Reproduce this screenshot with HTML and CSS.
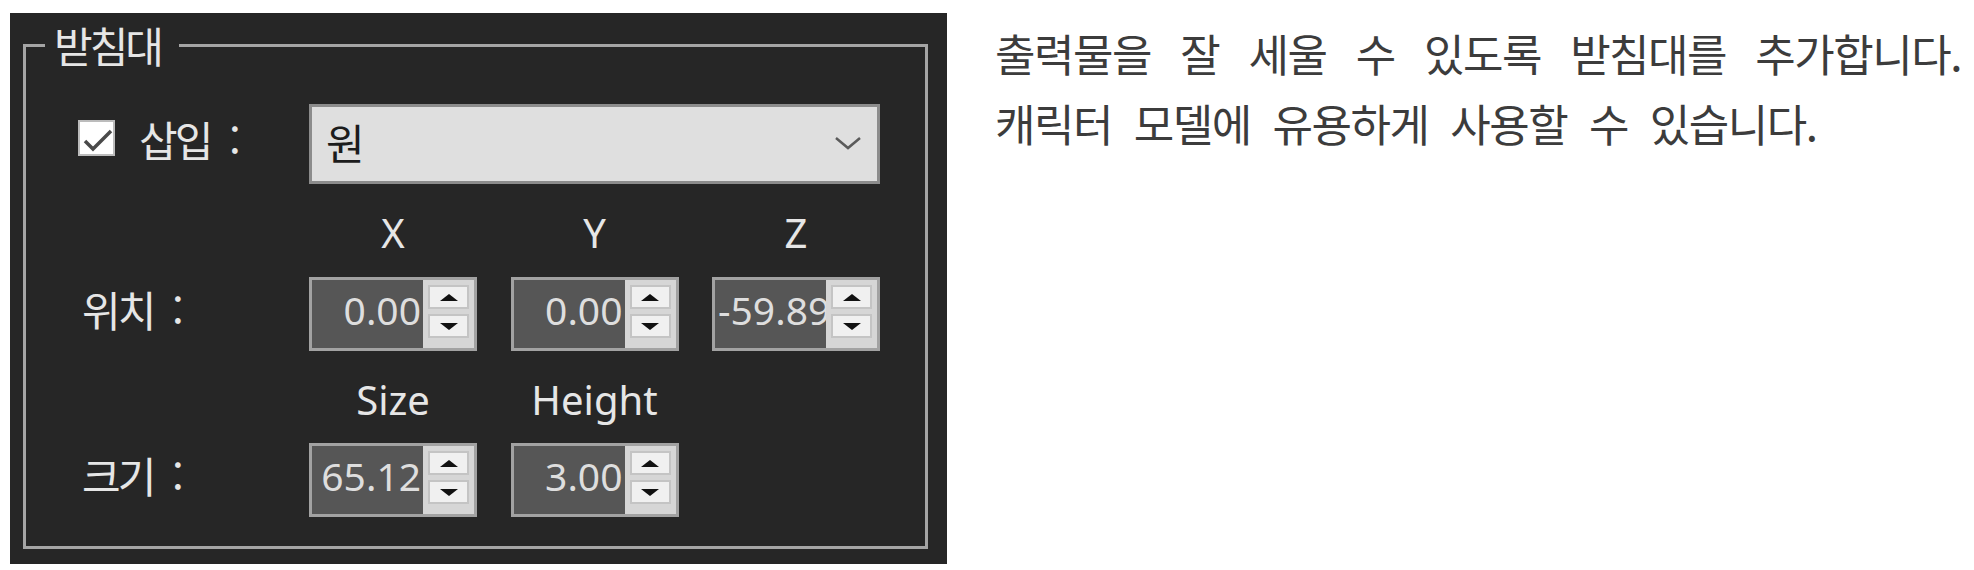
FILE: index.html
```html
<!DOCTYPE html>
<html lang="ko">
<head>
<meta charset="utf-8">
<title>받침대</title>
<link rel="stylesheet" href="styles.css">
</head>
<body>
<div class="page">
  <div class="panel">
    <fieldset class="group">
      <legend class="group-title">받침대</legend>
      <div class="form">
        <div class="cell-label check-label">
          <span class="checkbox"><svg viewBox="0 0 33 32" width="33" height="32"><polyline points="5,19 13,27 31,9" fill="none" stroke="#4a4a4a" stroke-width="3.5"/></svg></span>
          <span class="label">삽입 :</span>
        </div>
        <div class="combo">
          <span class="combo-value">원</span>
          <svg class="chevron" viewBox="0 0 28 16" width="28" height="16"><polyline points="2,3 14,13 26,3" fill="none" stroke="#5a5a5a" stroke-width="2.5"/></svg>
        </div>

        <div class="cell-label"></div>
        <div class="axis">X</div>
        <div class="axis">Y</div>
        <div class="axis">Z</div>

        <div class="cell-label"><span class="label">위치 :</span></div>
        <div class="spin"><span class="spin-value">0.00</span><span class="spin-buttons"><span class="spin-btn"><span class="tri tri-up"></span></span><span class="spin-btn"><span class="tri tri-down"></span></span></span></div>
        <div class="spin"><span class="spin-value">0.00</span><span class="spin-buttons"><span class="spin-btn"><span class="tri tri-up"></span></span><span class="spin-btn"><span class="tri tri-down"></span></span></span></div>
        <div class="spin"><span class="spin-value spin-value-left">-59.89</span><span class="spin-buttons"><span class="spin-btn"><span class="tri tri-up"></span></span><span class="spin-btn"><span class="tri tri-down"></span></span></span></div>

        <div class="cell-label"></div>
        <div class="axis">Size</div>
        <div class="axis">Height</div>
        <div class="axis"></div>

        <div class="cell-label"><span class="label">크기 :</span></div>
        <div class="spin"><span class="spin-value">65.12</span><span class="spin-buttons"><span class="spin-btn"><span class="tri tri-up"></span></span><span class="spin-btn"><span class="tri tri-down"></span></span></span></div>
        <div class="spin"><span class="spin-value">3.00</span><span class="spin-buttons"><span class="spin-btn"><span class="tri tri-up"></span></span><span class="spin-btn"><span class="tri tri-down"></span></span></span></div>
        <div class="axis"></div>
      </div>
    </fieldset>
  </div>
  <div class="desc">
    <p class="desc-line desc-line-justify">출력물을 잘 세울 수 있도록 받침대를 추가합니다.</p>
    <p class="desc-line">캐릭터 모델에 유용하게 사용할 수 있습니다.</p>
  </div>
</div>
</body>
</html>
```

FILE: styles.css
```css
* { box-sizing: border-box; }

html, body {
  margin: 0;
  padding: 0;
  background: #ffffff;
}

body {
  font-family: "Noto Sans", "Noto Sans CJK KR", sans-serif;
}

.page {
  display: flex;
  align-items: flex-start;
  width: 1974px;
  height: 570px;
  overflow: hidden;
}

.panel {
  flex: none;
  margin: 13px 0 0 10px;
  width: 937px;
  height: 551px;
  background: #262626;
  padding: 12px 0 0 13px;
}

.group {
  margin: 0;
  width: 905px;
  border: 3px solid #a4a4a4;
  padding: 0 0 29px 0;
  min-width: 0;
}

.group-title {
  margin-left: 19px;
  padding: 0 18px 0 9px;
  font-family: "Noto Sans CJK KR", sans-serif;
  font-size: 42px;
  letter-spacing: -3px;
  line-height: 40px;
  color: #e6e6e6;
}

.form {
  display: grid;
  grid-template-columns: 197.5px 168px 168px 168px;
  grid-template-rows: 80px 93px 74px 92px 74px;
  column-gap: 33.5px;
  margin-top: 39px;
  padding-left: 52px;
}

.cell-label {
  display: flex;
  align-items: center;
  padding-bottom: 12px;
}

.check-label {
  gap: 20px;
}

.checkbox {
  flex: none;
  width: 37px;
  height: 36px;
  background: #ffffff;
  border: 2px solid #bcbcbc;
  display: flex;
}

.checkbox svg { display: block; }

.label {
  font-family: "Noto Sans CJK KR", sans-serif;
  font-size: 42px;
  letter-spacing: -3px;
  word-spacing: 10px;
  color: #e6e6e6;
  padding-left: 4px;
  white-space: nowrap;
}

.combo {
  grid-column: 2 / 5;
  display: flex;
  align-items: center;
  justify-content: space-between;
  background: #dfdfdf;
  border: 3px solid #8c8c8c;
  padding: 0 15px 6px 14px;
}

.combo-value {
  font-family: "Noto Sans CJK KR", sans-serif;
  font-size: 42px;
  color: #1c1c1c;
}

.chevron {
  display: block;
  margin-top: 4px;
}

.axis {
  display: flex;
  align-items: center;
  justify-content: center;
  font-size: 40px;
  color: #e6e6e6;
  padding-top: 4px;
}

.spin {
  display: flex;
  height: 74px;
  border: 3px solid #a2a2a2;
  background: #565656;
}

.spin-value {
  flex: 1;
  min-width: 0;
  overflow: hidden;
  white-space: nowrap;
  text-align: right;
  font-size: 39px;
  line-height: 60px;
  color: #dedede;
  padding: 0 2px 0 4px;
}

.spin-value-left {
  text-align: left;
  padding-left: 3px;
}

.spin-buttons {
  flex: none;
  width: 51px;
  display: flex;
  flex-direction: column;
  gap: 5px;
  padding: 5px 5px 10px 5px;
  background: #d6d6d6;
}

.spin-btn {
  flex: 1;
  display: flex;
  align-items: center;
  justify-content: center;
  background: #f0f0f0;
  border: 2px solid #c4c4c4;
}

.tri {
  width: 0;
  height: 0;
  border-left: 9px solid transparent;
  border-right: 9px solid transparent;
}

.tri-up { border-bottom: 7px solid #111111; }
.tri-down { border-top: 7px solid #111111; }

.desc {
  margin-left: 48px;
  padding-top: 18px;
}

.desc-line {
  margin: 0;
  font-family: "Noto Sans CJK KR", sans-serif;
  font-size: 44px;
  line-height: 70px;
  letter-spacing: -1.5px;
  word-spacing: 11px;
  color: #3c3c3c;
  white-space: nowrap;
}

.desc-line-justify {
  width: 966px;
  text-align: justify;
  text-align-last: justify;
}
```
